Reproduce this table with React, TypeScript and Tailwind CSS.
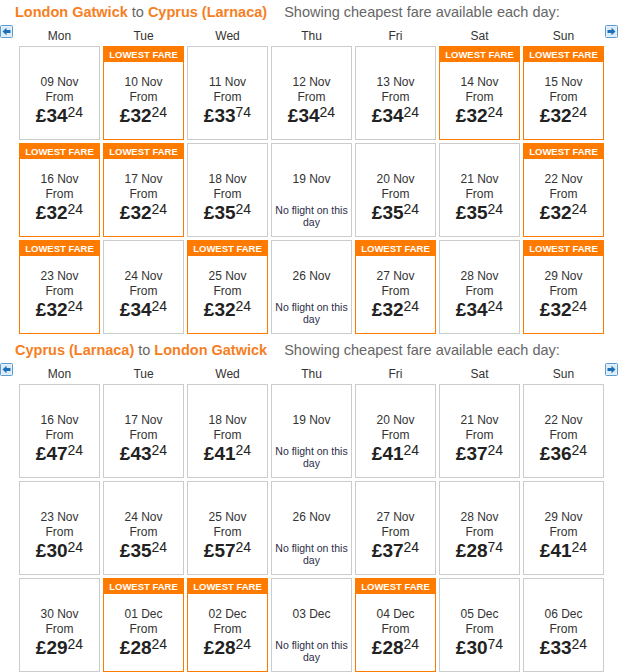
import React from 'react';

type Day = { date: string; price?: string; lowest?: boolean };

const DAYS = ['Mon', 'Tue', 'Wed', 'Thu', 'Fri', 'Sat', 'Sun'];

const d = (date: string, price?: string, lowest = false): Day => ({ date, price, lowest });

const outbound: Day[] = [
  d('09 Nov', '34.24'), d('10 Nov', '32.24', true), d('11 Nov', '33.74'), d('12 Nov', '34.24'),
  d('13 Nov', '34.24'), d('14 Nov', '32.24', true), d('15 Nov', '32.24', true),
  d('16 Nov', '32.24', true), d('17 Nov', '32.24', true), d('18 Nov', '35.24'), d('19 Nov'),
  d('20 Nov', '35.24'), d('21 Nov', '35.24'), d('22 Nov', '32.24', true),
  d('23 Nov', '32.24', true), d('24 Nov', '34.24'), d('25 Nov', '32.24', true), d('26 Nov'),
  d('27 Nov', '32.24', true), d('28 Nov', '34.24'), d('29 Nov', '32.24', true),
];

const inbound: Day[] = [
  d('16 Nov', '47.24'), d('17 Nov', '43.24'), d('18 Nov', '41.24'), d('19 Nov'),
  d('20 Nov', '41.24'), d('21 Nov', '37.24'), d('22 Nov', '36.24'),
  d('23 Nov', '30.24'), d('24 Nov', '35.24'), d('25 Nov', '57.24'), d('26 Nov'),
  d('27 Nov', '37.24'), d('28 Nov', '28.74'), d('29 Nov', '41.24'),
  d('30 Nov', '29.24'), d('01 Dec', '28.24', true), d('02 Dec', '28.24', true), d('03 Dec'),
  d('04 Dec', '28.24', true), d('05 Dec', '30.74'), d('06 Dec', '33.24'),
];

const Arrow = ({ dir }: { dir: 'left' | 'right' }) => (
  <svg width="13" height="13" viewBox="0 0 13 13" className="block">
    <rect x="0.5" y="0.5" width="12" height="12" rx="1" fill="#eef5fc" stroke="#5a9bd0" />
    <rect x="1.5" y="1.5" width="10" height="10" fill="#dcebf8" />
    {dir === 'left' ? (
      <path d="M2.5 6.5 L6.5 2.8 L6.5 5 L10.5 5 L10.5 8 L6.5 8 L6.5 10.2 Z" fill="#1d6fb8" />
    ) : (
      <path d="M10.5 6.5 L6.5 2.8 L6.5 5 L2.5 5 L2.5 8 L6.5 8 L6.5 10.2 Z" fill="#1d6fb8" />
    )}
  </svg>
);

// frame drawn as 1px padding on a coloured box
const orangeFrame = 'h-[94px] p-px bg-[#ff7b00]';
const greyFrame = 'h-[94px] p-px bg-[#cccccc]';

const Cell = ({ day }: { day: Day }) => {
  const [pounds, pence] = day.price ? day.price.split('.') : ['', ''];
  return (
    <div className={day.lowest ? orangeFrame : greyFrame}>
      <div className="h-full bg-white text-center text-[#333]">
        {day.lowest && (
          <div className="h-[15px] bg-[#ff7b00] text-white font-bold text-[9.5px] leading-[15px] uppercase">
            Lowest Fare
          </div>
        )}
        <div className={day.lowest ? 'pt-[13px]' : 'pt-[28px]'}>
          <div className="text-[12px] leading-[15px]">{day.date}</div>
          {day.price ? (
            <>
              <div className="text-[12px] leading-[15px]">From</div>
              <div className="text-[19px] leading-[21px] font-bold text-[#222]">
                £{pounds}
                <span className="align-top text-[14px] leading-[14px] font-normal">{pence}</span>
              </div>
            </>
          ) : (
            <div className="mt-[17px] px-0.5 text-[10.5px] leading-[12px] text-[#2d2d48]">
              No flight on this day
            </div>
          )}
        </div>
      </div>
    </div>
  );
};

const Section = ({ from, to, days }: { from: string; to: string; days: Day[] }) => (
  <div>
    <div className="h-[25px] pl-[15px] flex items-center text-[14.5px] whitespace-nowrap">
      <span className="font-bold text-[#f5801f]">{from}</span>
      <span className="text-[#666] px-[4px]">to</span>
      <span className="font-bold text-[#f5801f]">{to}</span>
      <span className="text-[#666] ml-[17px]">Showing cheapest fare available each day:</span>
    </div>
    <div className="flex h-[21px]">
      <div className="w-[19px]">
        <Arrow dir="left" />
      </div>
      <div className="grid grid-cols-[repeat(7,81px)] gap-x-[3px]">
        {DAYS.map((name) => (
          <div key={name} className="text-center text-[12px] leading-[14px] pt-[4px] text-[#333]">
            {name}
          </div>
        ))}
      </div>
      <div className="pl-[1px]">
        <Arrow dir="right" />
      </div>
    </div>
    <div className="pl-[19px] grid grid-cols-[repeat(7,81px)] gap-[3px]">
      {days.map((day, i) => (
        <Cell key={i} day={day} />
      ))}
    </div>
  </div>
);

export default function App() {
  return (
    <div className="w-[623px] h-[672px] overflow-hidden bg-white font-['Liberation_Sans',Arial,sans-serif]">
      <Section from="London Gatwick" to="Cyprus (Larnaca)" days={outbound} />
      <div className="h-[4px]" />
      <Section from="Cyprus (Larnaca)" to="London Gatwick" days={inbound} />
    </div>
  );
}
